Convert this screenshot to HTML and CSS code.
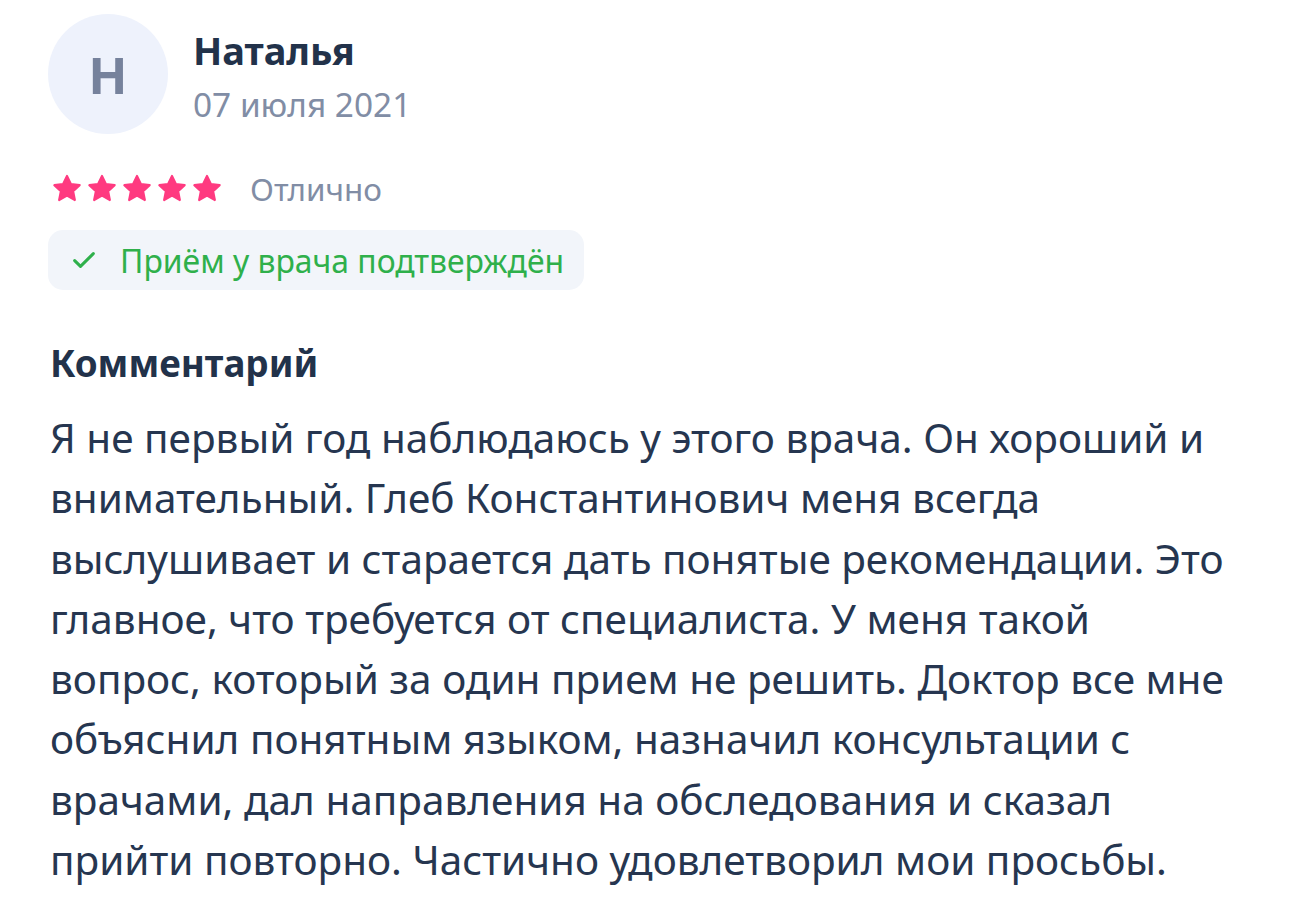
FILE: index.html
```html
<!DOCTYPE html>
<html lang="ru">
<head>
<meta charset="utf-8">
<link rel="stylesheet" href="styles.css">
</head>
<body>
<article class="review">
  <header class="author">
    <div class="avatar">Н</div>
    <div class="author-info">
      <div class="name">Наталья</div>
      <div class="date">07 июля 2021</div>
    </div>
  </header>
  <div class="rating">
    <div class="stars">
      <svg class="star" viewBox="0 0 24 24"><path d="M12 2.2l2.9 6.1 6.6.8-4.9 4.6 1.3 6.6L12 17l-5.9 3.3 1.3-6.6-4.9-4.6 6.6-.8z" stroke-linejoin="round"/></svg>
      <svg class="star" viewBox="0 0 24 24"><path d="M12 2.2l2.9 6.1 6.6.8-4.9 4.6 1.3 6.6L12 17l-5.9 3.3 1.3-6.6-4.9-4.6 6.6-.8z" stroke-linejoin="round"/></svg>
      <svg class="star" viewBox="0 0 24 24"><path d="M12 2.2l2.9 6.1 6.6.8-4.9 4.6 1.3 6.6L12 17l-5.9 3.3 1.3-6.6-4.9-4.6 6.6-.8z" stroke-linejoin="round"/></svg>
      <svg class="star" viewBox="0 0 24 24"><path d="M12 2.2l2.9 6.1 6.6.8-4.9 4.6 1.3 6.6L12 17l-5.9 3.3 1.3-6.6-4.9-4.6 6.6-.8z" stroke-linejoin="round"/></svg>
      <svg class="star" viewBox="0 0 24 24"><path d="M12 2.2l2.9 6.1 6.6.8-4.9 4.6 1.3 6.6L12 17l-5.9 3.3 1.3-6.6-4.9-4.6 6.6-.8z" stroke-linejoin="round"/></svg>
    </div>
    <span class="rating-label">Отлично</span>
  </div>
  <div class="badge">
    <svg class="check" viewBox="0 0 24 24"><path d="M4 12.5l5 5L20 6.5"/></svg>
    <span>Приём у врача подтверждён</span>
  </div>
  <h2 class="comment-title">Комментарий</h2>
  <p class="comment-text">Я не первый год наблюдаюсь у этого врача. Он хороший и внимательный. Глеб Константинович меня всегда выслушивает и старается дать понятые рекомендации. Это главное, что требуется от специалиста. У меня такой вопрос, который за один прием не решить. Доктор все мне объяснил понятным языком, назначил консультации с врачами, дал направления на обследования и сказал прийти повторно. Частично удовлетворил мои просьбы.</p>
</article>
</body>
</html>
```

FILE: styles.css
```css
html, body {
  margin: 0;
  padding: 0;
  background: #ffffff;
}

body {
  font-family: "Noto Sans", "Open Sans", sans-serif;
  color: #263650;
}

.review {
  padding: 14px 48px 0 48px;
  width: 1194px;
}

.author {
  display: flex;
  align-items: center;
  gap: 25px;
}

.avatar {
  width: 120px;
  height: 120px;
  border-radius: 50%;
  background: #eef2fc;
  color: #76829c;
  font-size: 51px;
  font-weight: 700;
  line-height: 1;
  display: flex;
  align-items: center;
  justify-content: center;
  flex-shrink: 0;
}

.author-info {
  display: flex;
  flex-direction: column;
  gap: 8px;
  padding-top: 6px;
}

.name {
  font-size: 38px;
  font-weight: 700;
  line-height: 46px;
  color: #22324a;
}

.date {
  font-size: 33.4px;
  line-height: 46px;
  color: #818da5;
}

.rating {
  display: flex;
  align-items: center;
  gap: 27px;
  margin-top: 35px;
  height: 40px;
}

.stars {
  display: flex;
  gap: 3px;
  padding-left: 3px;
}

.star {
  width: 32px;
  height: 32px;
  fill: #ff3a80;
  stroke: #ff3a80;
  stroke-width: 1.6;
}

.rating-label {
  font-size: 31.4px;
  line-height: 40px;
  color: #818da5;
}

.badge {
  display: inline-flex;
  align-items: center;
  gap: 22px;
  margin-top: 21px;
  height: 60px;
  padding: 0 20px 0 22px;
  border-radius: 15px;
  background: #f2f5fa;
  color: #2fb04b;
  font-size: 31.9px;
}

.check {
  width: 28px;
  height: 28px;
  fill: none;
  stroke: #2fb04b;
  stroke-width: 2.6;
  stroke-linecap: round;
  stroke-linejoin: round;
}

.comment-title {
  margin: 48px 0 0 2px;
  font-size: 36.8px;
  font-weight: 700;
  line-height: 50px;
  color: #22324a;
}

.comment-text {
  margin: 20px 0 0 2px;
  font-size: 40.5px;
  line-height: 60.3px;
  color: #263650;
}
```
